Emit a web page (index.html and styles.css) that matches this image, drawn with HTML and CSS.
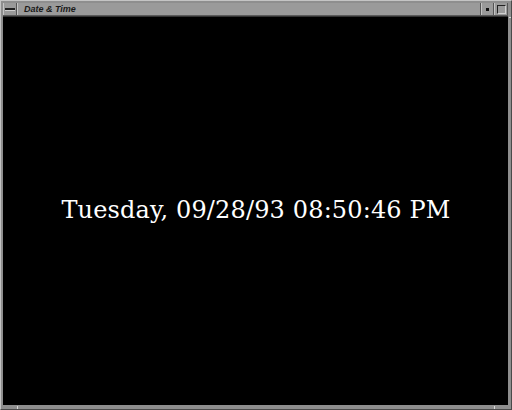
FILE: index.html
```html
<!DOCTYPE html>
<html>
<head>
<meta charset="utf-8">
<link rel="stylesheet" href="styles.css">
</head>
<body>
<div class="window">
  <div class="titlebar">
    <div class="btn menu-btn"><span class="menu-bar"></span></div>
    <div class="title">Date &amp; Time</div>
    <div class="btn min-btn"><span class="dot"></span></div>
    <div class="btn max-btn"><span class="square"></span></div>
  </div>
  <div class="content">
    <div class="clock">Tuesday, 09/28/93 08:50:46 PM</div>
  </div>
  <span class="tick tick-right"></span>
  <span class="tick tick-bottom-left"></span>
  <span class="tick tick-bottom-right"></span>
</div>
</body>
</html>
```

FILE: styles.css
```css
html, body {
  margin: 0;
  padding: 0;
  background: #000;
}
.window {
  position: relative;
  width: 512px;
  height: 410px;
  box-sizing: border-box;
  background: #8e8e8e;
  border-top: 1px solid #c4c4c4;
  border-left: 1px solid #c4c4c4;
  border-right: 1px solid #4a4a4a;
  border-bottom: 1px solid #4a4a4a;
  padding: 2px 3px 4px 2px;
  display: flex;
  flex-direction: column;
}
.titlebar {
  height: 12px;
  display: flex;
  align-items: stretch;
  background: #9a9a9a;
  border-bottom: 1px solid #5a5a5a;
}
.btn {
  position: relative;
  display: flex;
  align-items: center;
  justify-content: center;
  border-left: 1px solid #c4c4c4;
  border-right: 1px solid #555;
  background: #9a9a9a;
}
.menu-btn {
  width: 12px;
}
.menu-bar {
  display: block;
  width: 10px;
  height: 2px;
  background: #222;
  border-bottom: 1px solid #d0d0d0;
  margin-top: 1px;
}
.title {
  flex: 1;
  font-family: "Liberation Sans", Arial, sans-serif;
  font-weight: bold;
  font-style: italic;
  font-size: 9px;
  line-height: 12px;
  color: #1a1a1a;
  padding-left: 6px;
  border-left: 1px solid #c4c4c4;
  border-right: 1px solid #555;
}
.min-btn {
  width: 11px;
}
.dot {
  display: block;
  width: 3px;
  height: 3px;
  background: #111;
}
.max-btn {
  width: 12px;
}
.square {
  display: block;
  width: 7px;
  height: 7px;
  border: 1px solid #222;
  border-right-color: #d0d0d0;
  border-bottom-color: #d0d0d0;
}
.content {
  flex: 1;
  background: #000;
  border-top: 1px solid #333;
  display: flex;
  align-items: center;
  justify-content: center;
}
.clock {
  font-family: "DejaVu Serif", "Liberation Serif", serif;
  font-size: 24px;
  letter-spacing: 0.15px;
  color: #fff;
  margin-top: 0;
  margin-bottom: 2px;
  margin-left: 1px;
}
.tick {
  position: absolute;
  background: #d8d8d8;
}
.tick-right {
  right: 0;
  top: 16px;
  width: 2px;
  height: 1px;
}
.tick-bottom-left {
  left: 16px;
  bottom: 0;
  width: 1px;
  height: 3px;
}
.tick-bottom-right {
  right: 16px;
  bottom: 0;
  width: 1px;
  height: 3px;
}
```
